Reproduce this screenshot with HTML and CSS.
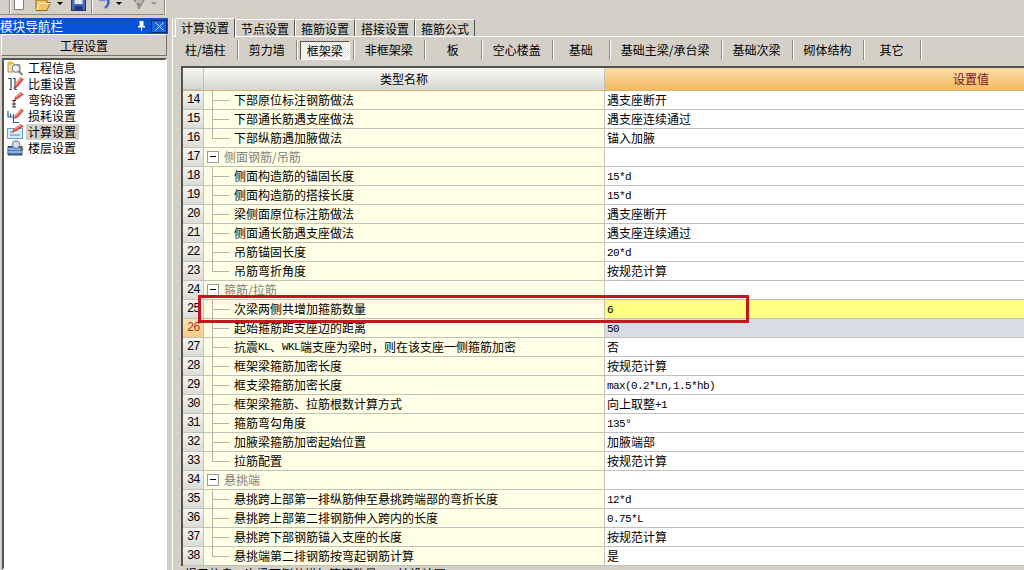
FILE: index.html
```html
<!DOCTYPE html>
<html lang="zh-CN">
<head>
<meta charset="utf-8">
<title>计算设置</title>
<link rel="stylesheet" href="styles.css">
</head>
<body>
<div class="app">
  <div class="toolbar">
    <div class="tb-group tb-first">
      <span class="tb-sep"></span>
      <svg class="tb-icon tb-new" width="12" height="11" viewBox="0 0 12 11"><path d="M1.500 -3H8L10.500 0V9.500H1.500Z" fill="#fff" stroke="#7d7d7d"/></svg>
      <svg class="tb-icon tb-open" width="17" height="12" viewBox="0 0 17 12"><path d="M1 0V10.500H12L15.500 2.500H12V0Z" fill="#f2c865" stroke="#8a6a1c"/><path d="M1.500 10L4.500 3.500H15" fill="none" stroke="#fff3c4"/></svg>
      <span class="tb-arrow"></span>
      <svg class="tb-icon tb-save" width="15" height="11" viewBox="0 0 15 11"><rect x="0.500" y="-4" width="14" height="14.500" fill="#4a68b8" stroke="#1f3272"/><rect x="3.500" y="-4" width="8" height="8" fill="#e4e8f4"/><rect x="3.500" y="6" width="8" height="4.500" fill="#20357c"/></svg>
    </div>
    <div class="tb-group tb-second">
      <svg class="tb-icon tb-undo" width="15" height="11" viewBox="0 0 15 11"><path d="M2 0C5 0 7 0 8 1" fill="none" stroke="#6f8fd6" stroke-width="2"/><path d="M9.500 -2C12.500 1 12 5.500 8 8" fill="none" stroke="#3a66c4" stroke-width="2.600"/></svg>
      <span class="tb-arrow"></span>
      <svg class="tb-icon tb-redo" width="15" height="11" viewBox="0 0 15 11"><path d="M1 0H13L10 4.500L8 9H6L5 4.500Z" fill="#96938c"/><path d="M4 0H10V3H4Z" fill="#bdbab3"/></svg>
      <span class="tb-arrow tb-arrow-off"></span>
    </div>
  </div>
  <div class="main">
    <aside class="nav">
      <div class="nav-title">
        <span class="nav-title-text">模块导航栏</span>
        <svg class="nav-pin" width="7" height="10" viewBox="0 0 7 10"><path d="M1.500 0H5.500V5H7V6.500H4V10H3V6.500H0V5H1.500Z" fill="#fff"/></svg>
        <span class="nav-close">
          <svg width="9" height="9" viewBox="0 0 9 9"><path d="M0.500 0.500L8.500 8.500M8.500 0.500L0.500 8.500" stroke="#cfe0ff" fill="none"/></svg>
        </span>
      </div>
      <div class="nav-button">工程设置</div>
      <ul class="nav-list">
        <li class="nav-item">
          <svg class="nav-icon" width="17" height="16" viewBox="0 0 17 16"><path d="M1 3H6L7 4.500H13V12H1Z" fill="#f0dfa0" stroke="#b09a58"/><path d="M3 0L4 2L6 2.500L4.500 4L3 5.500L1.500 4L0 2.500L2 2Z" fill="#f2c21c"/><circle cx="9" cy="8.500" r="3.800" fill="#e8f0fa" stroke="#6f7f98"/><path d="M11.500 11L15.500 15" stroke="#8f8a80" stroke-width="2.200"/></svg>
          <span class="nav-text">工程信息</span>
        </li>
        <li class="nav-item">
          <svg class="nav-icon" width="17" height="16" viewBox="0 0 17 16"><path d="M1 2.500H4V13.500H2M6 2.500H8V13.500H10" fill="none" stroke="#2c5060" stroke-width="1.200"/><path d="M6.500 13L7.500 9L13.500 1L16.800 3.200L10.500 11Z" fill="#d9473f"/><path d="M8 9L13.800 1.500L15 2.300L9 10Z" fill="#f29a8e"/><path d="M6.500 13L7.500 10L9.500 11.500Z" fill="#6a625a"/></svg>
          <span class="nav-text">比重设置</span>
        </li>
        <li class="nav-item">
          <svg class="nav-icon" width="17" height="16" viewBox="0 0 17 16"><path d="M7 8V15M5 8.500H9M5 12H9M5 15H9" fill="none" stroke="#30343a"/><path d="M7 8.500L8 5L13.500 0L16.800 2.200L10.800 7Z" fill="#d9473f"/><path d="M8.500 5L13.800 0.500L15 1.300L9.500 6Z" fill="#f29a8e"/></svg>
          <span class="nav-text">弯钩设置</span>
        </li>
        <li class="nav-item">
          <svg class="nav-icon" width="17" height="16" viewBox="0 0 17 16"><path d="M1 3V9H3.500V5.500M3.500 9H6.500V6M6.500 9V14.500H12" fill="none" stroke="#2c6088" stroke-width="1.200"/><path d="M7 11L8 7.500L14 0.500L16.800 2.500L10.800 9.500Z" fill="#d9473f"/><path d="M8.500 7.500L14.200 1L15.300 1.800L9.500 8.500Z" fill="#f29a8e"/></svg>
          <span class="nav-text">损耗设置</span>
        </li>
        <li class="nav-item">
          <svg class="nav-icon" width="17" height="16" viewBox="0 0 17 16"><rect x="0.500" y="4.500" width="15" height="10" fill="#d8ecf8" stroke="#5f9fc8"/><path d="M3 8H7M3 11H13" stroke="#4f8fb8"/><path d="M5 8.500L6.500 5L13.500 0L16.800 2.200L9.500 7Z" fill="#d9473f"/><path d="M7 5L13.800 0.500L15 1.300L8 6Z" fill="#f29a8e"/></svg>
          <span class="nav-text nav-text-on">计算设置</span>
        </li>
        <li class="nav-item">
          <svg class="nav-icon" width="17" height="16" viewBox="0 0 17 16"><path d="M1 6.500H15V15H1Z" fill="#4a78b8" stroke="#23457c"/><path d="M1 9H15M1 12H15" stroke="#d8e6f6"/><circle cx="9" cy="4.500" r="3.800" fill="#d4dae4" stroke="#6f7c90"/><path d="M12 7L16 10" stroke="#6a6a6a" stroke-width="2"/></svg>
          <span class="nav-text">楼层设置</span>
        </li>
      </ul>
    </aside>
    <section class="content">
      <div class="tabs">
        <span class="tab tab-on">计算设置</span>
        <span class="tab">节点设置</span>
        <span class="tab">箍筋设置</span>
        <span class="tab">搭接设置</span>
        <span class="tab">箍筋公式</span>
      </div>
      <div class="subtabs">
        <span class="subtab">柱/墙柱</span>
        <span class="subtab">剪力墙</span>
        <span class="subtab"><span class="subtab-on">框架梁</span></span>
        <span class="subtab">非框架梁</span>
        <span class="subtab">板</span>
        <span class="subtab">空心楼盖</span>
        <span class="subtab">基础</span>
        <span class="subtab">基础主梁/承台梁</span>
        <span class="subtab">基础次梁</span>
        <span class="subtab">砌体结构</span>
        <span class="subtab">其它</span>
      </div>
      <div class="table">
        <div class="row head"><span class="num"></span><span class="name">类型名称</span><span class="val">设置值</span></div>
        <div class="row"><span class="num">14</span><span class="name"><i class="tree"></i>下部原位标注钢筋做法</span><span class="val">遇支座断开</span></div>
        <div class="row"><span class="num">15</span><span class="name"><i class="tree"></i>下部通长筋遇支座做法</span><span class="val">遇支座连续通过</span></div>
        <div class="row"><span class="num">16</span><span class="name"><i class="tree tree-end"></i>下部纵筋遇加腋做法</span><span class="val">锚入加腋</span></div>
        <div class="row group"><span class="num">17</span><span class="name"><i class="box"></i>侧面钢筋/吊筋</span><span class="val"></span></div>
        <div class="row"><span class="num">18</span><span class="name"><i class="tree"></i>侧面构造筋的锚固长度</span><span class="val"><b class="mono">15*d</b></span></div>
        <div class="row"><span class="num">19</span><span class="name"><i class="tree"></i>侧面构造筋的搭接长度</span><span class="val"><b class="mono">15*d</b></span></div>
        <div class="row"><span class="num">20</span><span class="name"><i class="tree"></i>梁侧面原位标注筋做法</span><span class="val">遇支座断开</span></div>
        <div class="row"><span class="num">21</span><span class="name"><i class="tree"></i>侧面通长筋遇支座做法</span><span class="val">遇支座连续通过</span></div>
        <div class="row"><span class="num">22</span><span class="name"><i class="tree"></i>吊筋锚固长度</span><span class="val"><b class="mono">20*d</b></span></div>
        <div class="row"><span class="num">23</span><span class="name"><i class="tree tree-end"></i>吊筋弯折角度</span><span class="val">按规范计算</span></div>
        <div class="row group"><span class="num">24</span><span class="name"><i class="box"></i>箍筋/拉筋</span><span class="val"></span></div>
        <div class="row row-edit"><span class="num">25</span><span class="name"><i class="tree"></i>次梁两侧共增加箍筋数量</span><span class="val"><b class="mono">6</b></span></div>
        <div class="row row-cur"><span class="num">26</span><span class="name"><i class="tree"></i>起始箍筋距支座边的距离</span><span class="val"><b class="mono">50</b></span></div>
        <div class="row"><span class="num">27</span><span class="name"><i class="tree"></i>抗震<b class="mono">KL</b>、<b class="mono">WKL</b>端支座为梁时，则在该支座一侧箍筋加密</span><span class="val">否</span></div>
        <div class="row"><span class="num">28</span><span class="name"><i class="tree"></i>框架梁箍筋加密长度</span><span class="val">按规范计算</span></div>
        <div class="row"><span class="num">29</span><span class="name"><i class="tree"></i>框支梁箍筋加密长度</span><span class="val"><b class="mono">max(0.2*Ln,1.5*hb)</b></span></div>
        <div class="row"><span class="num">30</span><span class="name"><i class="tree"></i>框架梁箍筋、拉筋根数计算方式</span><span class="val">向上取整<b class="mono">+1</b></span></div>
        <div class="row"><span class="num">31</span><span class="name"><i class="tree"></i>箍筋弯勾角度</span><span class="val"><b class="mono">135°</b></span></div>
        <div class="row"><span class="num">32</span><span class="name"><i class="tree"></i>加腋梁箍筋加密起始位置</span><span class="val">加腋端部</span></div>
        <div class="row"><span class="num">33</span><span class="name"><i class="tree tree-end"></i>拉筋配置</span><span class="val">按规范计算</span></div>
        <div class="row group"><span class="num">34</span><span class="name"><i class="box"></i>悬挑端</span><span class="val"></span></div>
        <div class="row"><span class="num">35</span><span class="name"><i class="tree"></i>悬挑跨上部第一排纵筋伸至悬挑跨端部的弯折长度</span><span class="val"><b class="mono">12*d</b></span></div>
        <div class="row"><span class="num">36</span><span class="name"><i class="tree"></i>悬挑跨上部第二排钢筋伸入跨内的长度</span><span class="val"><b class="mono">0.75*L</b></span></div>
        <div class="row"><span class="num">37</span><span class="name"><i class="tree"></i>悬挑跨下部钢筋锚入支座的长度</span><span class="val">按规范计算</span></div>
        <div class="row"><span class="num">38</span><span class="name"><i class="tree tree-end"></i>悬挑端第二排钢筋按弯起钢筋计算</span><span class="val">是</span></div>
        <div class="mark"></div>
      </div>
      <div class="hint">提示信息：次梁两侧共增加箍筋数量，<b class="mono">0</b> 按设计图</div>
    </section>
  </div>
</div>
</body>
</html>
```
FILE: styles.css
```css
* { box-sizing: border-box; }
html, body { margin: 0; padding: 0; }
body {
  width: 1024px;
  height: 570px;
  overflow: hidden;
  background: #d4d0c8;
  color: #000;
  font: 12px/16px "Noto Sans CJK SC", "Liberation Sans", sans-serif;
}
.app { display: flex; flex-direction: column; width: 1024px; height: 570px; overflow: hidden; }

/* toolbar */
.toolbar { display: flex; flex: 0 0 18px; height: 18px; width: 165px; padding-bottom: 3px; }
.tb-group { display: flex; align-items: flex-start; height: 15px; border-right: 1px solid #8c8a84; border-bottom: 1px solid #8c8a84; box-shadow: 1px 0 0 #fff; }
.tb-first { width: 92px; padding-left: 9px; }
.tb-second { width: 73px; padding-left: 5px; }
.tb-sep { flex: none; width: 1px; height: 14px; margin-right: 3px; background: #8c8a84; box-shadow: 1px 0 0 #fff; }
.tb-icon { display: block; flex: none; }
.tb-new { margin-right: 10px; }
.tb-open { margin-right: 5px; }
.tb-save { margin-left: 8px; }
.tb-undo { margin-right: 4px; }
.tb-redo { margin-left: 10px; margin-right: 4px; }
.tb-arrow { flex: none; width: 0; height: 0; margin-top: 2px; border: 3px solid transparent; border-top: 3px solid #000; border-bottom: 0; }
.tb-arrow-off { border-top-color: #96938c; }

.main { display: flex; flex: 1; min-height: 0; }

/* navigator */
.nav { flex: 0 0 168px; display: flex; flex-direction: column; }
.nav-title { display: flex; align-items: center; height: 16px; background: #0a52d6; color: #fff; font-size: 12.600px; }
.nav-title-text { flex: 1; white-space: nowrap; }
.nav-pin { display: block; margin-right: 6px; }
.nav-close { display: flex; align-items: center; justify-content: center; width: 16px; height: 13px; margin-right: 1px; background: #1a63e0; border: 1px solid #062a72; }
.nav-button { height: 22px; margin: 0 1px; line-height: 22px; text-align: center; background: #d4d0c8; border: 1px solid; border-color: #fff #77746e #77746e #fff; }
.nav-list { flex: 1; margin: 2px 1px 0 2px; padding: 0 0 0 3px; list-style: none; background: #fff; border: 2px solid; border-color: #55534e #fff #fff #55534e; }
.nav-item { display: flex; align-items: center; height: 16px; }
.nav-icon { display: block; flex: none; margin-right: 2px; }
.nav-text { padding: 0 3px 0 2px; white-space: nowrap; }
.nav-text-on { background: #d4d0c8; }

/* tabs */
.content { flex: 1; min-width: 0; margin-left: 4px; border-left: 1px solid #fff; display: flex; flex-direction: column; }
.tabs { display: flex; align-items: flex-end; flex: 0 0 19px; height: 19px; padding-left: 2px; border-bottom: 1px solid #fff; }
.tab { height: 17px; padding: 0 5px; line-height: 17px; border: 1px solid; border-color: #fff #55534e transparent #fff; border-bottom: 0; border-radius: 2px 2px 0 0; white-space: nowrap; }
.tab-on { height: 19px; padding: 0 5px; margin-bottom: -1px; background: #d4d0c8; position: relative; }
.subtabs { display: flex; align-items: center; flex: 0 0 29px; height: 29px; padding-left: 2px; padding-bottom: 3px; }
.subtab { display: flex; align-items: center; justify-content: center; flex: none; min-width: 56px; height: 20px; padding: 0 11px 0 10px; border-right: 1px solid #8c8a84; box-shadow: 1px 0 0 #fff; white-space: nowrap; margin-right: 1px; }
.subtab-on { display: block; margin: 0 -8px; padding: 1px 6px 0; height: 19px; line-height: 16px; border: 1px solid; border-color: #55534e #fff #fff #55534e; background: repeating-conic-gradient(#fff 0 25%, #e4e1db 0 50%) 0 0 / 2px 2px; }

/* table */
.table { position: relative; margin-left: 8px; width: 1170px; border-left: 2px solid #55534e; border-top: 2px solid #55534e; background: #fff; }
.row { display: flex; height: 19px; border-bottom: 1px solid #c2c2bc; line-height: 18px; white-space: nowrap; }
.num { flex: 0 0 21px; padding-left: 4px; font: 12px/18px "Liberation Mono", monospace; letter-spacing: -1px; background: linear-gradient(#f4f4f1, #dcdcd7); border-right: 1px solid #c2c2bc; }
.name { flex: 0 0 401px; display: flex; background: #ffffe6; border-right: 1px solid #c2c2bc; }
.val { flex: 0 0 732px; padding-left: 2px; background: #fff; }
.mono { font: 11px/18px "Liberation Mono", monospace; letter-spacing: -0.600px; vertical-align: 1px; }
.head { height: 23px; line-height: 21px; border-bottom: 1px solid #d8b66e; }
.head .num { background: linear-gradient(#f6f6f4, #d4d4cf); border-bottom: 1px solid #c2c2bc; }
.head .name { justify-content: center; background: linear-gradient(#f9f9f7, #d6d6d1); }
.head .val { padding: 0; text-align: center; color: #7b1030; background: linear-gradient(#fbdca6, #f2bb60); }
.tree { display: block; flex: none; width: 22px; height: 19px; margin-left: 8px; background:
  linear-gradient(#b4b4aa, #b4b4aa) 0 0 / 1px 19px no-repeat,
  linear-gradient(#b4b4aa, #b4b4aa) 0 9px / 17px 1px no-repeat; }
.tree-end { background:
  linear-gradient(#b4b4aa, #b4b4aa) 0 0 / 1px 10px no-repeat,
  linear-gradient(#b4b4aa, #b4b4aa) 0 9px / 17px 1px no-repeat; }
.box { display: block; flex: none; position: relative; width: 12px; height: 12px; margin: 3px 5px 0 3px; background: #fff; border: 1px solid #9a9a92; }
.box::after { content: ""; position: absolute; left: 2px; top: 4px; width: 6px; height: 1px; background: #000; }
.group .name { color: #808080; }
.row-edit .val { background: #ffff80; }
.row-cur .num { background: linear-gradient(#fde3b8, #f8c98a); color: #a03a1a; }
.row-cur .val { background: #d9dce6; }
.mark { position: absolute; left: 15px; top: 227px; width: 551px; height: 28px; border: 3px solid #c8141c; }
.hint { padding-left: 12px; line-height: 16px; white-space: nowrap; }
```
